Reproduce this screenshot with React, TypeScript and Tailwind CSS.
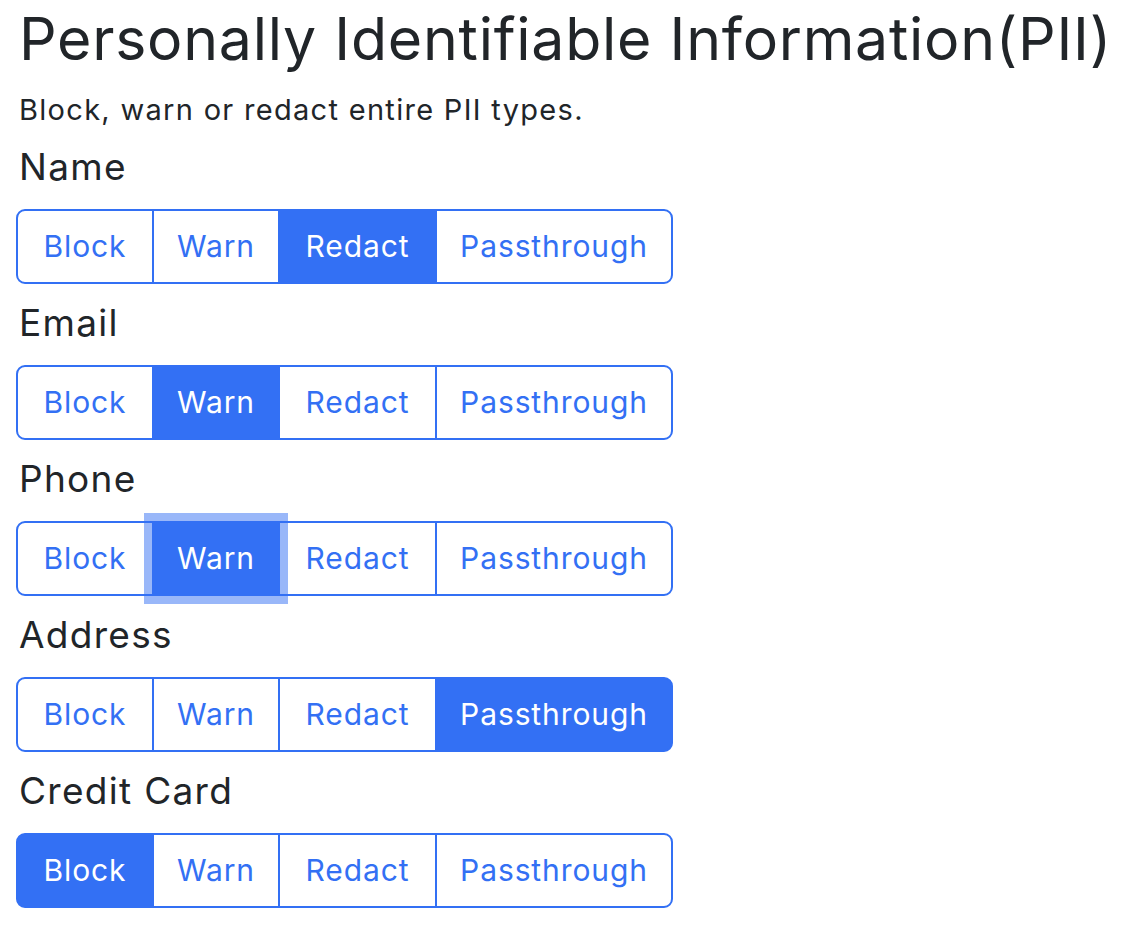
import React from "react";

const options = ["Block", "Warn", "Redact", "Passthrough"];
const widths = ["w-[138px]", "w-[128px]", "w-[159px]", "w-[238px]"];

const rows: { label: string; active: number; focus?: boolean }[] = [
  { label: "Name", active: 2 },
  { label: "Email", active: 1 },
  { label: "Phone", active: 1, focus: true },
  { label: "Address", active: 3 },
  { label: "Credit Card", active: 0 },
];

function Group({ active, focus }: { active: number; focus?: boolean }) {
  return (
    <div className="flex h-[75px] -ml-px">
      {options.map((o, i) => {
        const isActive = i === active;
        const first = i === 0;
        const last = i === options.length - 1;
        return (
          <div
            key={o}
            className={[
              "relative flex items-center justify-center border-2 border-[#3370f4] text-[30px] tracking-[0.9px]",
              widths[i],
              first ? "rounded-l-[9px]" : "-ml-[2px]",
              last ? "rounded-r-[9px]" : "",
              isActive ? "bg-[#3370f4] text-white z-10" : "bg-white text-[#3370f4]",
              isActive && focus ? "shadow-[0_0_0_8px_rgba(51,112,244,0.5)] z-20" : "",
            ].join(" ")}
          >
            {o}
          </div>
        );
      })}
    </div>
  );
}

export default function App() {
  return (
    <div className="bg-white min-h-[926px] px-[17px] text-[#212529]" style={{ fontFamily: "Inter, 'Noto Sans', sans-serif" }}>
      <h1 className="pl-[2px] text-[59px] leading-[78px] font-normal tracking-[0.75px] whitespace-nowrap">Personally Identifiable Information(PII)</h1>
      <p className="pl-[2px] text-[29px] leading-[38px] mt-[13px] tracking-[1.3px] whitespace-nowrap">Block, warn or redact entire PII types.</p>
      <div className="flex flex-col -mt-px">
        {rows.map((r) => (
          <div key={r.label} className="flex flex-col">
            <div className="pl-[2px] text-[37px] leading-[44px] mt-[17px] mb-[20px] tracking-[1.3px]">{r.label}</div>
            <Group active={r.active} focus={r.focus} />
          </div>
        ))}
      </div>
    </div>
  );
}
